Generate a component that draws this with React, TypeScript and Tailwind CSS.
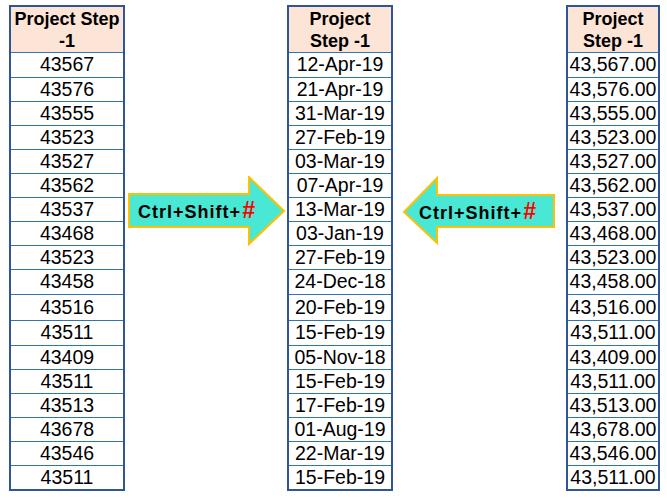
import React from "react";

const col1 = ["43567","43576","43555","43523","43527","43562","43537","43468","43523","43458","43516","43511","43409","43511","43513","43678","43546","43511"];
const col2 = ["12-Apr-19","21-Apr-19","31-Mar-19","27-Feb-19","03-Mar-19","07-Apr-19","13-Mar-19","03-Jan-19","27-Feb-19","24-Dec-18","20-Feb-19","15-Feb-19","05-Nov-18","15-Feb-19","17-Feb-19","01-Aug-19","22-Mar-19","15-Feb-19"];
const col3 = ["43,567.00","43,576.00","43,555.00","43,523.00","43,527.00","43,562.00","43,537.00","43,468.00","43,523.00","43,458.00","43,516.00","43,511.00","43,409.00","43,511.00","43,513.00","43,678.00","43,546.00","43,511.00"];
const heights = [25,24,24,24,24,24,24,24,24,25,26,25,24,24,24,24,24,24];

function Table({ header, rows, className }: { header: React.ReactNode; rows: string[]; className: string }) {
  return (
    <div className={"flex flex-col border-2 border-[#2f5597] bg-white " + className}>
      <div className="h-[45px] bg-[#fce4d6] flex flex-col items-center justify-center font-bold text-[18px] leading-[22px] text-black text-center">
        {header}
      </div>
      {rows.map((r, i) => (
        <div
          key={i}
          className="border-t border-[#2e75b6] flex items-center justify-center text-[19.5px] text-black"
          style={{ height: heights[i] }}
        >
          {r}
        </div>
      ))}
    </div>
  );
}

function Label() {
  return (
    <span className="font-bold text-[18px] tracking-[1px] text-black whitespace-nowrap leading-none">
      Ctrl+Shift+<span className="text-[#ff0000] italic text-[23px] ml-[1px]">#</span>
    </span>
  );
}

export default function App() {
  return (
    <div
      className="w-[667px] h-[498px] bg-white flex items-start pt-[5px]"
      style={{ fontFamily: '"Liberation Sans", Arial, sans-serif' }}
    >
      <Table
        className="ml-[9px] w-[116px]"
        header={<><span>Project Step</span><span>-1</span></>}
        rows={col1}
      />
      <div className="relative ml-[2px] mt-[171px] w-[159px] h-[70px]">
        <svg width="159" height="70" viewBox="0 0 159 70">
          <polygon
            points="2,18 122,18 122,1 157,35 122,68 122,51 2,51"
            fill="#48e8d4"
            stroke="#ffc000"
            strokeWidth="2"
          />
        </svg>
        <div className="absolute left-[11px] top-[18px] h-[33px] flex items-center">
          <Label />
        </div>
      </div>
      <Table
        className="ml-[1px] w-[106px]"
        header={<><span>Project</span><span>Step -1</span></>}
        rows={col2}
      />
      <div className="relative ml-[9px] mt-[171px] w-[156px] h-[70px]">
        <svg width="156" height="70" viewBox="0 0 156 70">
          <polygon
            points="2,36 35,2 35,19 152,19 152,51 35,51 35,67"
            fill="#48e8d4"
            stroke="#ffc000"
            strokeWidth="2"
          />
        </svg>
        <div className="absolute left-[17px] top-[19px] h-[32px] flex items-center">
          <Label />
        </div>
      </div>
      <Table
        className="ml-[8px] w-[94px]"
        header={<><span>Project</span><span>Step -1</span></>}
        rows={col3}
      />
    </div>
  );
}
